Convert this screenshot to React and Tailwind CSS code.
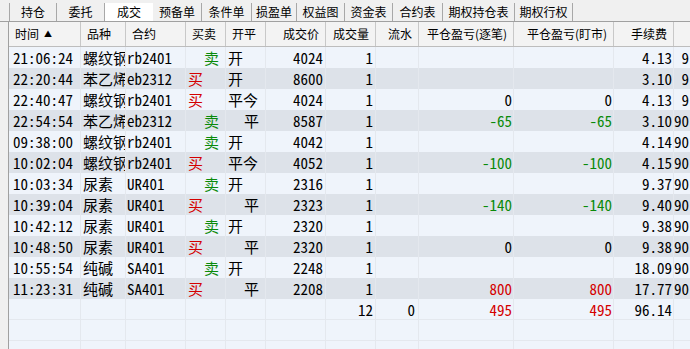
import React from 'react';

const tabs = [
    { label: '持仓', w: 'w-[48px]' },
    { label: '委托', w: 'w-[48px]' },
    { label: '成交', w: 'w-[48px]', active: true },
    { label: '预备单', w: 'w-[49px]' },
    { label: '条件单', w: 'w-[50px]' },
    { label: '损盈单', w: 'w-[45px]' },
    { label: '权益图', w: 'w-[48px]' },
    { label: '资金表', w: 'w-[48px]' },
    { label: '合约表', w: 'w-[50px]' },
    { label: '期权持仓表', w: 'w-[72px]' },
    { label: '期权行权', w: 'w-[58px]' },
];

// column widths include the 1px right grid line
const cols = ['w-[72px]', 'w-[45px]', 'w-[60px]', 'w-[40px]', 'w-[40px]', 'w-[60px]', 'w-[50px]', 'w-[43px]', 'w-[95px]', 'w-[100px]', 'w-[60px]', 'w-[40px]'];

const headers = [
    { t: '时间', a: 'left', sort: true },
    { t: '品种', a: 'left' },
    { t: '合约', a: 'left' },
    { t: '买卖', a: 'left' },
    { t: '开平', a: 'left' },
    { t: '成交价', a: 'right' },
    { t: '成交量', a: 'right' },
    { t: '流水', a: 'right' },
    { t: '平仓盈亏(逐笔)', a: 'right' },
    { t: '平仓盈亏(盯市)', a: 'right' },
    { t: '手续费', a: 'right' },
    { t: '', a: 'left' },
];

const trades = [
    ['21:06:24', '螺纹钢', 'rb2401', '卖', '开', '4024', '', '4.13', ' 9'],
    ['22:20:44', '苯乙烯', 'eb2312', '买', '开', '8600', '', '3.10', ' 9'],
    ['22:40:47', '螺纹钢', 'rb2401', '买', '平今', '4024', '0', '4.13', ' 9'],
    ['22:54:54', '苯乙烯', 'eb2312', '卖', '平', '8587', '-65', '3.10', '90'],
    ['09:38:00', '螺纹钢', 'rb2401', '卖', '开', '4042', '', '4.14', '90'],
    ['10:02:04', '螺纹钢', 'rb2401', '买', '平今', '4052', '-100', '4.15', '90'],
    ['10:03:34', '尿素', 'UR401', '卖', '开', '2316', '', '9.37', '90'],
    ['10:39:04', '尿素', 'UR401', '买', '平', '2323', '-140', '9.40', '90'],
    ['10:42:12', '尿素', 'UR401', '卖', '开', '2320', '', '9.38', '90'],
    ['10:48:50', '尿素', 'UR401', '买', '平', '2320', '0', '9.38', '90'],
    ['10:55:54', '纯碱', 'SA401', '卖', '开', '2248', '', '18.09', '90'],
    ['11:23:31', '纯碱', 'SA401', '买', '平', '2208', '800', '17.77', '90'],
];

const pnlColor = (v) => {
    if (v.startsWith('-')) return 'text-[#0a8a0a]';
    if (v && v !== '0') return 'text-[#d40000]';
    return 'text-black';
};

function Cell({ i, className = '', children }) {
    return (
        <div className={`${cols[i]} shrink-0 h-full border-r border-[#e4e8ee] overflow-hidden whitespace-pre flex items-center ${className}`}>
            {children}
        </div>
    );
}

function TradeRow({ r, idx }) {
    const [time, name, code, side, oc, price, pnl, fee, tail] = r;
    const bg = idx % 2 === 0 ? 'bg-[#eff4fb]' : 'bg-[#dde2e9]';
    return (
        <div className={`flex h-[21px] ${bg}`}>
            <Cell i={0} className="pl-[4px]">{time}</Cell>
            <Cell i={1} className="pl-[2px]">{name}</Cell>
            <Cell i={2} className="pl-[1px]">{code}</Cell>
            <Cell i={3} className="pl-[2px]">
                {side === '买'
                    ? <span className="text-[#d40000]">买</span>
                    : <span className="text-[#0a8a0a] ml-[16px]">卖</span>}
            </Cell>
            <Cell i={4} className="pl-[2px]">
                <span className={oc === '平' ? 'ml-[16px]' : ''}>{oc}</span>
            </Cell>
            <Cell i={5} className="justify-end pr-[2px]">{price}</Cell>
            <Cell i={6} className="justify-end pr-[2px]">1</Cell>
            <Cell i={7} className="justify-end pr-[3px]"></Cell>
            <Cell i={8} className={`justify-end pr-[1px] ${pnlColor(pnl)}`}>{pnl}</Cell>
            <Cell i={9} className={`justify-end pr-[1px] ${pnlColor(pnl)}`}>{pnl}</Cell>
            <Cell i={10} className="justify-end pr-[1px]">{fee}</Cell>
            <Cell i={11} className="border-r-0">{tail}</Cell>
        </div>
    );
}

export default function App() {
    return (
        <div className="w-[690px] h-[349px] overflow-hidden bg-[#f0f0f0] text-black" style={{ fontFamily: '"Noto Sans CJK SC", sans-serif' }}>
            {/* tab strip */}
            <div className="flex h-[22px] pt-[3px] pl-[9px] border-b border-[#a0a0a0] text-[12px]">
                {tabs.map((t, i) => (
                    <div
                        key={t.label}
                        className={`${t.w} shrink-0 flex items-center justify-center leading-none ${t.active ? 'bg-white' : 'border-r border-[#a8a8a8]'} ${i === 0 ? 'border-l' : ''}`}
                    >
                        {t.label}
                    </div>
                ))}
            </div>

            <div className="ml-[8px] border-l border-[#a0a0a0] w-[700px]">
                {/* column header */}
                <div className="flex h-[25px] bg-[#f3f3f3] border-b border-[#bdbdbd] text-[12px]">
                    {headers.map((h, i) => (
                        <div
                            key={i}
                            className={`${cols[i]} shrink-0 h-full border-r border-[#c8c8c8] flex items-center whitespace-nowrap overflow-hidden ${h.a === 'right' ? 'justify-end pr-[6px]' : 'pl-[6px]'}`}
                        >
                            {h.t}
                            {h.sort && <span className="ml-[5px] text-[8px] leading-none">▲</span>}
                        </div>
                    ))}
                </div>

                {/* trade rows */}
                <div className="text-[15px] leading-none" style={{ fontFamily: '"Noto Sans Mono CJK SC", "Liberation Mono", "Noto Sans CJK SC", monospace' }}>
                    {trades.map((r, i) => <TradeRow key={i} r={r} idx={i} />)}

                    {/* totals */}
                    <div className="flex h-[21px] bg-[#eff4fb] border-b border-[#e4e8ee]">
                        <Cell i={0} />
                        <Cell i={1} />
                        <Cell i={2} />
                        <Cell i={3} />
                        <Cell i={4} />
                        <Cell i={5} />
                        <Cell i={6} className="justify-end pr-[2px]">12</Cell>
                        <Cell i={7} className="justify-end pr-[3px]">0</Cell>
                        <Cell i={8} className="justify-end pr-[1px] text-[#d40000]">495</Cell>
                        <Cell i={9} className="justify-end pr-[1px] text-[#d40000]">495</Cell>
                        <Cell i={10} className="justify-end pr-[1px]">96.14</Cell>
                        <Cell i={11} className="border-r-0" />
                    </div>
                    {[0, 1].map((k) => (
                        <div key={k} className="flex h-[21px] bg-[#eff4fb] border-b border-[#e4e8ee]">
                            {cols.map((_, i) => <Cell key={i} i={i} />)}
                        </div>
                    ))}
                </div>
            </div>
        </div>
    );
}
